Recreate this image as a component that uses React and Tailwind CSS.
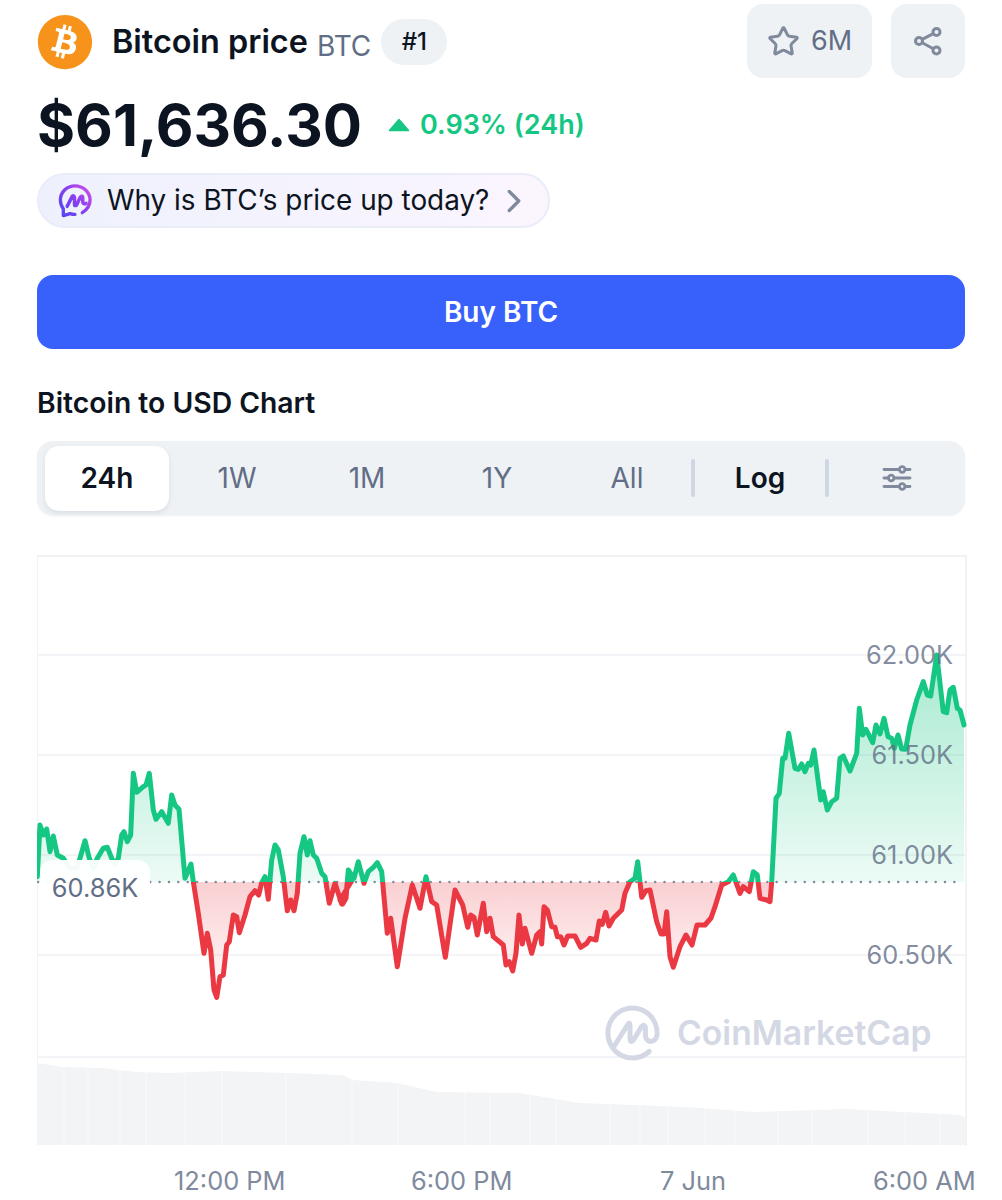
import React from "react";
import { FaBitcoin } from "react-icons/fa";
import { SiCoinmarketcap } from "react-icons/si";
import { Star, ChevronRight } from "lucide-react";

const z4 = [[52,350],[60,195],[70,225],[80,207],[90,275],[100,228],[112,285],[130,295],[150,325],[170,325],[180,295],[195,242],[208,295],[220,325],[232,295],[250,265],[262,262],[275,295],[285,312],[295,295],[305,225],[312,215],[322,245],[332,225],[340,40],[350,97],[370,80],[378,75],[388,40],[400,150],[408,178],[425,155],[445,190],[455,105],[465,135],[477,148],[495,355],[513,312],[520,365],[535,460],[552,580],[562,520],[572,570],[582,690],[590,712],[600,650],[610,645],[620,555],[628,545],[640,465],[650,470],[658,518],[675,465],[690,410],[705,392],[716,405],[725,368],[735,350],[745,418],[755,300],[765,255],[775,270],[790,350],[802,452],[812,420],[822,452],[832,400],[840,280],[852,230],[862,285],[870,242],[880,285],[890,295],[905,340],[915,350],[928,430],[945,370],[965,432],[978,410],[985,330],[1000,355]].map(([x,y])=>[20+x/3,760+y/3]);
const z5 = [[0,180],[8,192],[18,175],[25,90],[42,115],[55,65],[72,130],[85,95],[100,82],[112,68],[125,95],[142,280],[152,235],[172,380],[195,235],[217,135],[240,205],[258,110],[275,185],[290,195],[316,352],[345,150],[368,195],[383,262],[392,225],[402,232],[412,285],[430,190],[440,275],[450,235],[460,290],[490,315],[498,375],[508,365],[518,393],[528,340],[537,225],[547,312],[555,265],[575,340],[590,285],[600,275],[605,312],[612,200],[622,210],[635,260],[645,262],[652,290],[662,290],[672,315],[683,288],[705,288],[722,322],[740,310],[750,295],[768,300],[778,243],[787,253],[797,217],[807,258],[820,235],[845,210],[855,160],[870,125],[885,115],[893,65],[905,172],[918,152],[930,150],[950,245],[963,282],[972,282],[980,215],[990,350],[1000,382],[1020,320]].map(([x,y])=>[340+x/3,840+y/3]);
const mid = [[686,935],[692,945],[697,925],[705,925],[711,918]];
const z6 = [[165,830],[185,765],[205,755],[220,735],[240,790],[250,770],[268,785],[280,725],[292,735],[300,805],[320,810],[330,815],[335,755],[348,505],[358,490],[368,385],[375,385],[386,310],[405,415],[415,418],[425,402],[435,425],[445,400],[452,405],[462,360],[482,510],[490,485],[502,540],[515,515],[530,505],[540,385],[550,378],[570,423],[590,370],[598,235],[608,315],[618,298],[638,338],[648,285],[660,312],[672,265],[684,320],[695,325],[703,355],[714,315],[725,357],[737,358],[750,285],[770,210],[790,155],[802,195],[812,198],[830,75],[850,245],[860,248],[870,180],[880,172],[892,235],[900,240],[912,285]].map(([x,y])=>[660+x/3,630+y/3]);
const pts = [...z4, ...z5, ...mid, ...z6];
const line = pts.map(([x,y])=>`${x.toFixed(1)},${y.toFixed(1)}`).join(" ");
const area = `37,882 ${line} 964,882`;
const vol = "37,1063 63,1067 102,1068 137,1072 170,1073 220,1071 287,1073 343,1075 353,1080 397,1083 437,1092 520,1093 580,1103 687,1107 753,1112 847,1109 960,1115 966,1118 966,1145 37,1145";
const volGaps = [64,88,120,146,185,222,286,352,398,465,490,530,556,610,640,668,705,735,778,812,868,905,940];

function Chart() {
  return (
    <svg className="absolute inset-0 h-full w-full" viewBox="37 555 930 592">
      <defs>
        <linearGradient id="g" gradientUnits="userSpaceOnUse" x1="0" y1="650" x2="0" y2="882">
          <stop offset="0" stopColor="#16c784" stopOpacity="0.38" />
          <stop offset="1" stopColor="#16c784" stopOpacity="0.08" />
        </linearGradient>
        <linearGradient id="r" gradientUnits="userSpaceOnUse" x1="0" y1="882" x2="0" y2="995">
          <stop offset="0" stopColor="#ea3943" stopOpacity="0.24" />
          <stop offset="1" stopColor="#ea3943" stopOpacity="0.02" />
        </linearGradient>
        <clipPath id="up"><rect x="37" y="555" width="930" height="327" /></clipPath>
        <clipPath id="dn"><rect x="37" y="882" width="930" height="265" /></clipPath>
      </defs>
      <path d="M37 1146V556H966V1146" fill="none" stroke="#f0f2f5" strokeWidth="2" />
      {[655,755,855,955,1057].map((y)=><line key={y} x1="37" x2="966" y1={y} y2={y} stroke="#f3f4f7" strokeWidth="2" />)}
      <polygon points={vol} fill="#f2f4f6" />
      {volGaps.map((x)=><line key={x} x1={x} x2={x} y1="1060" y2="1145" stroke="#ffffff" strokeOpacity="0.5" strokeWidth="1" />)}
      <polygon points={area} fill="url(#g)" clipPath="url(#up)" />
      <polygon points={area} fill="url(#r)" clipPath="url(#dn)" />
      <line x1="38" x2="962" y1="882" y2="882" stroke="#808a9d" strokeWidth="2.4" strokeLinecap="round" strokeDasharray="0.1 9.25" />
      <polyline points={line} fill="none" stroke="#16c784" strokeWidth="5" strokeLinejoin="round" strokeLinecap="round" clipPath="url(#up)" />
      <polyline points={line} fill="none" stroke="#ea3943" strokeWidth="5" strokeLinejoin="round" strokeLinecap="round" clipPath="url(#dn)" />
    </svg>
  );
}

function Ask() {
  return (
    <svg width="35" height="35" viewBox="0 0 36 36" fill="none">
      <defs>
        <linearGradient id="ask" x1="2" y1="32" x2="34" y2="4" gradientUnits="userSpaceOnUse">
          <stop offset="0" stopColor="#4f46f0" />
          <stop offset="0.55" stopColor="#8b3ff0" />
          <stop offset="1" stopColor="#d04fe8" />
        </linearGradient>
      </defs>
      <path d="M26 30.5C31 27.5 34 23 34 17.5C34 9.5 27 3 18.5 3C10 3 3.5 9.5 3.5 17.5C3.5 21 4.5 24 6.5 26.5V33.5L13.5 31.5C15 32 16.5 32.3 18.5 32.3" stroke="url(#ask)" strokeWidth="3.4" strokeLinecap="round" strokeLinejoin="round" />
      <path d="M10.5 24L15.5 14C16.3 12.5 18 13 18 14.8V22C18 23.5 19.6 23.7 20.3 22.3L24 14.5C25 13 26.5 13.5 26.5 15V19C26.5 21 28 22 30 21" stroke="url(#ask)" strokeWidth="3.6" strokeLinecap="round" strokeLinejoin="round" />
    </svg>
  );
}

function Share() {
  return (
    <svg width="30" height="30" viewBox="0 0 30 30" fill="none" stroke="#808a9d" strokeWidth="3">
      <circle cx="23.5" cy="6" r="3.5" />
      <circle cx="6" cy="15" r="3.5" />
      <circle cx="23.5" cy="24.5" r="3.5" />
      <path d="M9.2 13.3L20.3 7.7M9.2 16.7L20.3 22.8" />
    </svg>
  );
}

function Sliders() {
  return (
    <svg width="30" height="30" viewBox="0 0 30 30" fill="none" stroke="#808a9d" strokeWidth="2.8" strokeLinecap="round">
      <path d="M2 6.5H17.5M23 6.5H28M2 15H6.5M12 15H28M2 23.5H17.5M23 23.5H28" />
      <circle cx="20.2" cy="6.5" r="2.8" />
      <circle cx="9.2" cy="15" r="2.8" />
      <circle cx="20.2" cy="23.5" r="2.8" />
    </svg>
  );
}

function Tab({ label, active }) {
  if (active) {
    return (
      <div className="flex h-[65px] w-[124px] items-center justify-center rounded-[14px] bg-white text-[28px] font-semibold text-[#0d1421] shadow-[0_2px_5px_rgba(88,102,126,0.14)]">{label}</div>
    );
  }
  return <div className="flex h-[65px] w-[124px] items-center justify-center text-[28px] font-normal text-[#616e85]">{label}</div>;
}

export default function App() {
  return (
    <div className="h-[1200px] w-[1002px] overflow-hidden bg-white px-[37px] pt-[4px] font-['Inter',sans-serif] text-[#0d1421]">
      <div className="flex h-[75px] items-start justify-between">
        <div className="flex items-center pt-[10px]">
          <FaBitcoin className="h-[56px] w-[56px] text-[#f7931a]" />
          <span className="ml-[19px] text-[32.4px] font-semibold leading-[46px]">Bitcoin price</span>
          <span className="ml-[9px] mt-[8px] text-[28px] leading-[38px] text-[#616e85]">BTC</span>
          <span className="ml-[10px] flex h-[46px] w-[66px] items-center justify-center rounded-[23px] bg-[#eff2f5] text-[24px] font-medium">#1</span>
        </div>
        <div className="flex gap-[19px]">
          <div className="flex h-[74px] w-[125px] items-center justify-center gap-[11px] rounded-[16px] bg-[#eff2f5] text-[27px] text-[#616e85]">
            <Star className="h-[33px] w-[33px] text-[#808a9d]" strokeWidth={2.2} />
            <span>6M</span>
          </div>
          <div className="flex h-[74px] w-[74px] items-center justify-center rounded-[16px] bg-[#eff2f5]">
            <Share />
          </div>
        </div>
      </div>

      <div className="mt-[8px] flex h-[76px] items-center">
        <span className="text-[58.2px] font-bold leading-[76px]">$61,636.30</span>
        <svg className="ml-[26px]" width="22" height="14" viewBox="0 0 22 14"><path d="M11 1.5L20.5 12.5H1.5Z" fill="#16c784" stroke="#16c784" strokeWidth="1.5" strokeLinejoin="round" /></svg>
        <span className="ml-[10px] text-[27px] font-semibold text-[#16c784]">0.93% (24h)</span>
      </div>

      <div className="mt-[10px] flex h-[55px] w-[513px] items-center rounded-[28px] border-2 border-[#e9edf8] bg-gradient-to-r from-[#eef1fd] to-[#fbf5fe] pl-[18px]">
        <Ask />
        <span className="ml-[15px] pb-[2px] text-[27.9px] leading-[34px]">Why is BTC’s price up today?</span>
        <ChevronRight className="ml-[6px] h-[38px] w-[38px] text-[#808a9d]" strokeWidth={2.1} />
      </div>

      <div className="mt-[47px] flex h-[74px] items-center justify-center rounded-[16px] bg-[#3861fb] pb-[1px] text-[28px] font-semibold text-white">Buy BTC</div>

      <h2 className="mt-[36px] text-[28.3px] font-semibold leading-[36px]">Bitcoin to USD Chart</h2>

      <div className="mt-[20px] flex h-[74px] items-center rounded-[16px] bg-[#eff2f5] pl-[8px] shadow-[0_1px_2px_rgba(88,102,126,0.10)]">
        <div className="flex gap-[6px]">
          <Tab label="24h" active />
          <Tab label="1W" />
          <Tab label="1M" />
          <Tab label="1Y" />
          <Tab label="All" />
        </div>
        <div className="ml-[2px] h-[38px] w-[4px] rounded-sm bg-[#cfd6e4]" />
        <div className="w-[130px] text-center text-[28px] font-semibold">Log</div>
        <div className="h-[38px] w-[4px] rounded-sm bg-[#cfd6e4]" />
        <div className="flex flex-1 justify-center"><Sliders /></div>
      </div>

      <div className="relative mt-[40px] h-[592px] w-[930px]">
        <Chart />
        <div className="absolute left-[568px] top-[450px] flex items-center gap-[17px] text-[#d3d8e4]">
          <SiCoinmarketcap className="h-[56px] w-[55px]" />
          <span className="text-[33.7px] font-semibold">CoinMarketCap</span>
        </div>
        {[["62.00K",84],["61.50K",184],["61.00K",284],["60.50K",384]].map(([t,top])=>(
          <span key={t} className="absolute right-[14px] text-[25.4px] leading-[32px] text-[#616e85]/80" style={{top}}>{t}</span>
        ))}
        <div className="absolute left-[3px] top-[305px] flex h-[48px] w-[110px] items-center justify-center rounded-[12px] bg-white/95 pt-[9px] text-[25.4px] text-[#616e85]">60.86K</div>
      </div>

      <div className="relative h-[55px] whitespace-nowrap text-[25.4px] text-[#808a9d]">
        <span className="absolute left-[137px] top-[18px] leading-[32px]">12:00 PM</span>
        <span className="absolute left-[374px] top-[18px] leading-[32px]">6:00 PM</span>
        <span className="absolute left-[623px] top-[18px] leading-[32px]">7 Jun</span>
        <span className="absolute left-[836px] top-[18px] leading-[32px]">6:00 AM</span>
      </div>
    </div>
  );
}
